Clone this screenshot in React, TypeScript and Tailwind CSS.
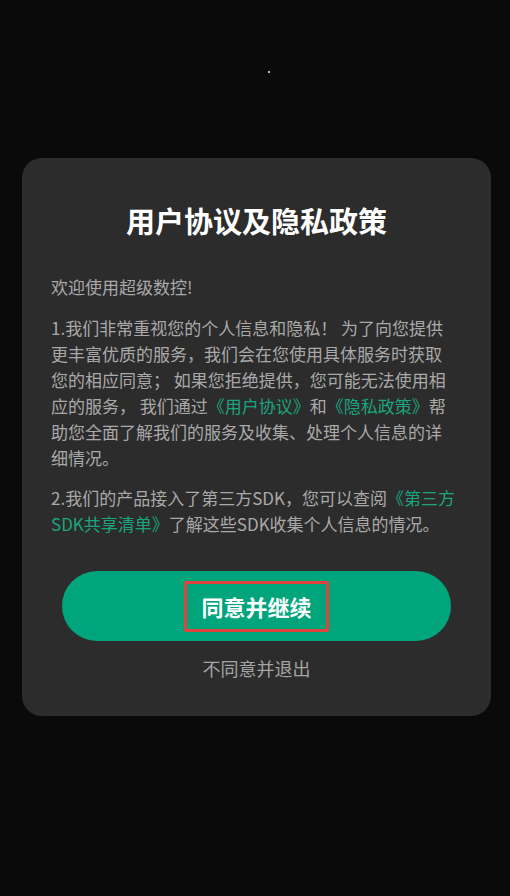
import React from "react";

const font = { fontFamily: '"Noto Sans CJK SC", "Noto Sans", sans-serif' };

export default function App() {
  const link = "text-[#1aa57c]";
  return (
    <div className="min-h-[896px] w-[510px] bg-[#0a0a0a] pt-[71px]" style={font}>
      <div className="ml-[268px] h-[2px] w-[2px] bg-[#bdbdbd]" />
      <div className="mt-[85px] ml-[22px] w-[469px] rounded-[20px] bg-[#2c2c2c] pt-[42px] pb-[35px]">
        <h1 className="text-center text-[29px] font-bold leading-[40px] text-white">
          用户协议及隐私政策
        </h1>
        <div className="mt-[34px] px-[29px] text-[17px] leading-[26px] text-[#a9a9a9] whitespace-nowrap">
          <p>欢迎使用超级数控!</p>
          <p className="mt-[15px]">
            1.我们非常重视您的个人信息和隐私！ 为了向您提供
            <br />
            更丰富优质的服务，我们会在您使用具体服务时获取
            <br />
            您的相应同意； 如果您拒绝提供，您可能无法使用相
            <br />
            应的服务， 我们通过<span className={link}>《用户协议》</span>和
            <span className={link}>《隐私政策》</span>帮
            <br />
            助您全面了解我们的服务及收集、处理个人信息的详
            <br />
            细情况。
          </p>
          <p className="mt-[14px]">
            2.我们的产品接入了第三方SDK，您可以查阅<span className={link}>《第三方</span>
            <br />
            <span className={link}>SDK共享清单》</span>了解这些SDK收集个人信息的情况。
          </p>
        </div>
        <button className="mt-[34px] ml-[40px] flex h-[70px] w-[389px] items-center justify-center rounded-full bg-[#00a57b]">
          <span className="flex h-[51px] items-center rounded-[2px] border-[3px] border-[#e2433f] px-[14px] text-[22px] font-bold text-white">
            同意并继续
          </span>
        </button>
        <div className="mt-[14px] text-center text-[18px] leading-[26px] text-[#a3a3a3]">
          不同意并退出
        </div>
      </div>
    </div>
  );
}
